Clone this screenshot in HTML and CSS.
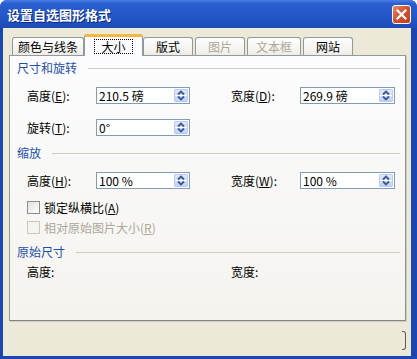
FILE: index.html
```html
<!DOCTYPE html>
<html lang="zh-CN">
<head>
    <meta charset="UTF-8">
    <title>设置自选图形格式</title>
    <link rel="stylesheet" href="styles.css">
</head>
<body>
    <div class="window">
        <div class="titlebar">
            <span class="title">设置自选图形格式</span>
            <span class="close">
                <svg width="11" height="11" viewBox="0 0 11 11">
                    <path d="M1.5 1.5 L9.5 9.5 M9.5 1.5 L1.5 9.5" stroke="#fff" stroke-width="2.2" stroke-linecap="square"/>
                </svg>
            </span>
        </div>
        <div class="client">
            <div class="tabs">
                <div class="tab t1">颜色与线条</div>
                <div class="tab t2 active"><span class="focus">大小</span></div>
                <div class="tab t3">版式</div>
                <div class="tab t4 disabled">图片</div>
                <div class="tab t5 disabled">文本框</div>
                <div class="tab t6">网站</div>
            </div>
            <div class="panel">
                <div class="group-head g1"><span>尺寸和旋转</span></div>
                <div class="row r1">
                    <div class="field">
                        <label>高度(<u>E</u>):</label>
                        <div class="spin-input">210.5 磅<span class="spin"></span></div>
                    </div>
                    <div class="field">
                        <label>宽度(<u>D</u>):</label>
                        <div class="spin-input wide">269.9 磅<span class="spin"></span></div>
                    </div>
                </div>
                <div class="row r2">
                    <div class="field">
                        <label>旋转(<u>T</u>):</label>
                        <div class="spin-input">0°<span class="spin"></span></div>
                    </div>
                </div>
                <div class="group-head g2"><span>缩放</span></div>
                <div class="row r3">
                    <div class="field">
                        <label>高度(<u>H</u>):</label>
                        <div class="spin-input">100 %<span class="spin"></span></div>
                    </div>
                    <div class="field">
                        <label>宽度(<u>W</u>):</label>
                        <div class="spin-input wide">100 %<span class="spin"></span></div>
                    </div>
                </div>
                <div class="check c1"><span class="box"></span>锁定纵横比(<u>A</u>)</div>
                <div class="check c2 disabled"><span class="box"></span>相对原始图片大小(<u>R</u>)</div>
                <div class="group-head g3"><span>原始尺寸</span></div>
                <div class="row r4">
                    <div class="field"><label>高度:</label></div>
                    <div class="field"><label>宽度:</label></div>
                </div>
            </div>
            <div class="footer"><span class="btn-edge"></span></div>
        </div>
    </div>
</body>
</html>
```

FILE: styles.css
```css
body {
    margin: 0;
    padding: 0;
    background-color: #fff;
    font-family: "Noto Sans CJK SC", "Liberation Sans", sans-serif;
    font-size: 12px;
    color: #000;
}
.window {
    width: 417px;
    height: 359px;
    box-sizing: border-box;
    padding: 0 6px 3px 3px;
    background: #1c46b0;
    border-radius: 7px 7px 0 0;
    display: flex;
    flex-direction: column;
}
.titlebar {
    height: 28px;
    margin: 0 -6px 0 -3px;
    padding: 0 8px 0 7px;
    border-radius: 7px 7px 0 0;
    background: linear-gradient(#4a7fe6 0%, #2a5fd0 12%, #2356c6 60%, #1d4bb6 100%);
    display: flex;
    align-items: center;
    justify-content: space-between;
}
.title {
    color: #fff;
    font-weight: bold;
    font-size: 13px;
    text-shadow: 1px 1px 0 #0a2a80;
}
.close {
    width: 17px;
    height: 17px;
    border: 1px solid #fff;
    border-radius: 3px;
    background: linear-gradient(135deg, #e7876b 0%, #d4512f 50%, #c23d1d 100%);
    display: flex;
    align-items: center;
    justify-content: center;
    margin-right: -2px;
}
.close svg {
    display: block;
}
.client {
    flex: 1;
    background: #ece9d8;
    padding: 0 5px 0 6px;
    display: flex;
    flex-direction: column;
}
.tabs {
    display: flex;
    height: 21px;
    margin-top: 6px;
    padding-left: 3px;
    position: relative;
    z-index: 1;
}
.tab {
    box-sizing: border-box;
    height: 18px;
    margin-top: 3px;
    margin-right: 2px;
    border: 1px solid #919b9c;
    border-bottom: none;
    border-radius: 3px 3px 0 0;
    background: linear-gradient(#fefefe, #f4f3ee 70%, #ecebe6);
    display: flex;
    align-items: center;
    justify-content: center;
    line-height: 14px;
}
.t1 { width: 72px; }
.t2 { width: 55px; }
.t3 { width: 50px; }
.t4 { width: 50px; }
.t5 { width: 54px; }
.t6 { width: 50px; }
.tab.active {
    width: 59px;
    height: 22px;
    margin: 0 0 -1px -2px;
    border-top: 3px solid #f5b73d;
    background: #fcfcfe;
}
.focus {
    border: 1px dotted #000;
    padding: 0 6px;
    line-height: 13px;
}
.tab.disabled {
    color: #aca899;
}
.panel {
    height: 266px;
    box-sizing: border-box;
    border: 1px solid #919b9c;
    border-right-color: #8a9293;
    border-bottom-color: #80878a;
    background: linear-gradient(#fcfcfe, #f4f3ee);
    box-shadow: 1px 1px 0 #d0cdc0;
    padding: 0 0 0 7px;
}
.group-head {
    height: 14px;
    display: flex;
    align-items: center;
    color: #1d50a8;
    line-height: 14px;
}
.group-head::after {
    content: "";
    flex: 1;
    height: 1px;
    margin: 0 5px 0 11px;
    background: #d0d0bf;
}
.g1 { margin-top: 5px; }
.g2 { margin-top: 10px; }
.g3 { margin-top: 11px; }
.row {
    display: flex;
    padding-left: 10px;
    height: 17px;
}
.r1 { margin-top: 12px; }
.r2 { margin-top: 15px; }
.r3 { margin-top: 12px; }
.r4 { margin-top: 6px; height: 14px; }
.field {
    width: 204px;
    flex-shrink: 0;
    display: flex;
    align-items: center;
}
.field label {
    width: 69px;
    flex-shrink: 0;
    line-height: 14px;
}
.spin-input {
    width: 94px;
    height: 17px;
    flex-shrink: 0;
    box-sizing: border-box;
    border: 1px solid #7f9db9;
    background: #fff;
    padding-left: 2px;
    display: flex;
    align-items: center;
    justify-content: space-between;
    line-height: 14px;
}
.spin-input.wide {
    width: 95px;
}
.spin {
    width: 14px;
    height: 13px;
    margin-right: 1px;
    box-sizing: border-box;
    border: 1px solid #b9cbf3;
    border-radius: 1px;
    background:
        url("data:image/svg+xml,%3Csvg xmlns='http://www.w3.org/2000/svg' width='12' height='11'%3E%3Cpath d='M3 4.5 L6 1.5 L9 4.5' fill='none' stroke='%233d5a8f' stroke-width='1.8'/%3E%3Cpath d='M3 6.5 L6 9.5 L9 6.5' fill='none' stroke='%233d5a8f' stroke-width='1.8'/%3E%3Cpath d='M0 5.5 H12' stroke='%23ffffff' stroke-width='1'/%3E%3C/svg%3E") center / 12px 11px no-repeat,
        linear-gradient(#dfe8fd, #c3d3f8);
}
.check {
    display: flex;
    align-items: center;
    height: 13px;
    padding-left: 10px;
    line-height: 13px;
}
.c1 { margin-top: 12px; }
.c2 { margin-top: 7px; }
.box {
    width: 13px;
    height: 13px;
    box-sizing: border-box;
    border: 1px solid #8c8c8c;
    background: linear-gradient(135deg, #e4e3dd, #fbfbf9);
    margin-right: 4px;
}
.check.disabled {
    color: #aca899;
}
.check.disabled .box {
    border-color: #cac8bb;
    background: #f4f3ee;
}
.footer {
    flex: 1;
    display: flex;
    justify-content: flex-end;
    align-items: flex-start;
}
.btn-edge {
    width: 3px;
    height: 17px;
    margin-top: 10px;
    border: 1px solid #5b5b5b;
    border-left: none;
    border-radius: 0 3px 3px 0;
}
```
